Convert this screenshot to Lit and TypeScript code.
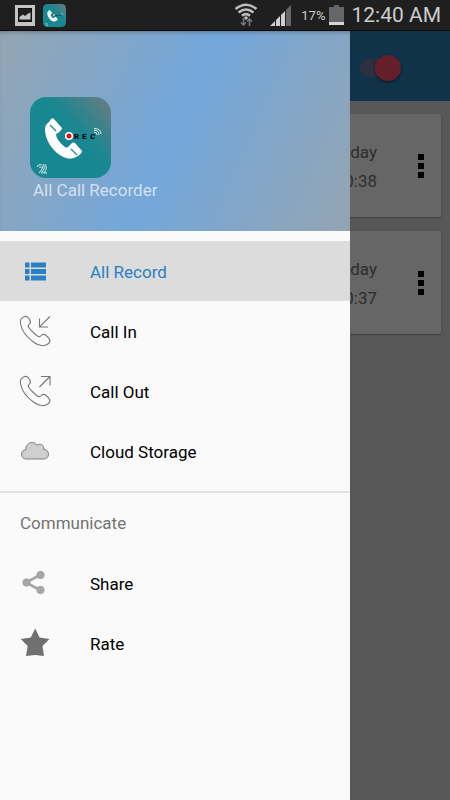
import { LitElement, html, svg, css } from "lit";
import { customElement, property, state } from "lit/decorators.js";

const HANDSET =
  "M4.500 0.500C1.500 1.500 0 4 0.500 7.500C1.500 14 7 21.500 14 26.500C18 29.300 23 30.500 26.500 28.800C28.500 27.800 30.200 26 29.800 24C29.300 22 27.500 20.500 25.500 19C23.500 17.800 22 18.500 20.800 20C19.800 21.200 17.500 20.500 15.500 18.500C12.500 16 10 13.500 8.500 11C7.600 9.500 9 8.500 10 7.300C11 6 10.300 4.500 9.300 3C8 1 6.500 0 4.500 0.500Z";

const icons: Record<string, unknown> = {
  list: svg`<g fill="#2980c4">
    <path d="M5 6.500h4.500v5H5zM11 6.500h15v5H11zM5 13h4.500v5H5zM11 13h15v5H11zM5 19.500h4.500v5H5zM11 19.500h15v5H11z"/></g>`,
  in: svg`<g fill="none" stroke="#777" stroke-width="1.100"><path d="${HANDSET}"/>
    <path d="M30 0.500L19.500 10.800M19.500 2.500v8.500h8.500"/></g>`,
  out: svg`<g fill="none" stroke="#777" stroke-width="1.100"><path d="${HANDSET}"/>
    <path d="M19.500 11L29.500 1M21 0.500h9v9"/></g>`,
  cloud: svg`<path d="M6.500 23C3.500 23 1.500 21 1.500 18.300C1.500 15.500 3.500 14 6 13.500C5.500 9.500 8.500 6.500 12 6.500C14 6.500 16 7.500 17 9.300C20 6.700 24.500 9 23.700 13.300C26.500 13.500 28.500 15.500 28.500 18.300C28.500 21 26.500 23 23.500 23Z" fill="#cfcfcf" stroke="#7d7d7d" stroke-width="1"/>`,
  share: svg`<g fill="#a6a6a6" stroke="#a6a6a6"><path d="M20 7L6 14.500L20 22" fill="none" stroke-width="2.600"/>
    <circle cx="20.500" cy="7" r="3.700"/><circle cx="6.500" cy="14.500" r="3.700"/><circle cx="20.500" cy="22" r="3.700"/></g>`,
  star: svg`<path d="M15.200 0.500L19.600 9.500L29.500 11L22.500 18L24 28L15.200 27L6 28L7.700 18L0.800 11L10.800 9.500Z" fill="#707070"/>`,
};

const logo = html`<svg viewBox="0 0 81 81" width="100%" height="100%" aria-hidden="true">
  <defs>
    <linearGradient id="teal" x1="0.450" y1="0.500" x2="1" y2="0">
      <stop offset="0" stop-color="#178792" /><stop offset="0.250" stop-color="#1b8791" />
      <stop offset="1" stop-color="#6d7c80" />
    </linearGradient>
  </defs>
  <rect width="81" height="81" rx="16" fill="url(#teal)" />
  <path d="M21 22L23 21L32 31Q32 33 28 36L26 37Q26 43 35 50Q37 51 38 50L42 46Q43 45 45 46L52 54Q52 57 46 60C40 63 35 62 27 56C19 49 15 40 15 32Q15 28 19 25Z" fill="#fff" />
  <path d="M20 28L26 34M41 52L47 58" stroke="#178792" stroke-width="1.200" fill="none" />
  <circle cx="39" cy="39" r="4" fill="#fff" /><circle cx="39" cy="39" r="2.500" fill="#e31010" />
  <g font-family="Roboto, sans-serif" font-size="8" font-weight="700" fill="#000">
    <text x="44" y="42">R</text><text x="52" y="42">E</text><text x="60" y="42" font-style="italic">C</text>
  </g>
  <g fill="none" stroke="#d7e6e7" stroke-width="1">
    <path d="M64 35Q67 35 67 38M64 33Q69 33 69 38M64 31.500Q71 31.500 71 37" />
    <path d="M7 70Q8 67 11 67.500Q14 69 12 72L9 76M9 70Q11 69 11 71M13 67Q16 71 12 75M15 67Q18 71 14 76" />
  </g>
  <text x="11" y="77" font-family="Roboto, sans-serif" font-size="3" font-weight="700" fill="#d7e6e7">Free</text>
</svg>`;

@customElement("status-bar")
class StatusBar extends LitElement {
  static styles = css`
    :host { display: flex; align-items: center; height: 31px; padding: 0 9px 0 15px;
      background: #1f1f1f; color: #ccc; border-bottom: 1px solid #120a08; box-sizing: border-box; }
    svg { display: block; flex: none; }
    .app { width: 23px; height: 23px; margin-left: 8px; }
    .space { flex: 1; }
    .signal { margin-left: 12px; }
    .percent { font-size: 13px; margin-left: 10px; }
    .battery { margin-left: 4px; }
    .time { font-size: 21px; margin-left: 7px; white-space: nowrap; }
  `;
  render() {
    return html`
      <svg width="20" height="21" viewBox="0 0 20 21" aria-hidden="true">
        <rect width="20" height="21" fill="#c4c4c4" />
        <rect x="3.500" y="3.500" width="13" height="13" fill="#1f1f1f" stroke="#111" />
        <path d="M4.500 14.500V12L8 9.500L10 11L14 8L15.500 7.500V14.500Z" fill="#c4c4c4" />
      </svg>
      <div class="app">${logo}</div>
      <div class="space"></div>
      <svg width="24" height="24" viewBox="0 0 24 24" aria-hidden="true">
        <g fill="none" stroke="#bdbdbd" stroke-width="2.600">
          <path d="M1.500 6Q12 -2.500 22.500 6M4.500 9.500Q12 3.500 19.500 9.500M8 12.800Q12 9.500 16 12.800" />
        </g>
        <circle cx="12" cy="15" r="1.800" fill="#bdbdbd" />
        <path d="M9.500 15v7M7 19.500L9.500 22L12 19.500M15.500 23v-7M13 18.500L15.500 16L18 18.500" fill="none" stroke="#777" stroke-width="1.600" />
      </svg>
      <svg class="signal" width="21" height="21" viewBox="0 0 21 21" aria-hidden="true">
        <path d="M0 21L16 5V21Z" fill="#cfcfcf" /><path d="M16 5L21 0V21H16Z" fill="#666" />
        <path d="M5.500 14v7M10.500 9v12M15.500 4v17" stroke="#1f1f1f" stroke-width="1" />
      </svg>
      <span class="percent">17%</span>
      <svg class="battery" width="15" height="20" viewBox="0 0 15 20" aria-hidden="true">
        <path d="M0 2H5V0H10V2H15V20H0Z" fill="#666" /><path d="M0 17H15V20H0Z" fill="#d5d5d5" />
      </svg>
      <span class="time">12:40 AM</span>
    `;
  }
}

@customElement("record-card")
class RecordCard extends LitElement {
  @property() day = "";
  @property() length = "";
  static styles = css`
    :host { display: flex; align-items: center; height: 103px; background: #fff; border-radius: 2px;
      box-shadow: 0 1px 2px rgba(0, 0, 0, 0.3); }
    .when { flex: 1; padding-top: 3px; text-align: right; font-size: 17px; line-height: 29px; color: #737373; }
    .more { display: flex; flex-direction: column; align-items: center; justify-content: center; gap: 3px;
      width: 40px; height: 60px; margin-left: 24px; padding: 0; border: 0; background: none; }
    .dot { width: 6px; height: 6px; background: #000; }
  `;
  render() {
    return html`
      <div class="when"><div>${this.day}</div><div>${this.length}</div></div>
      <button class="more" aria-label="More options">
        <span class="dot"></span><span class="dot"></span><span class="dot"></span>
      </button>
    `;
  }
}

@customElement("nav-drawer")
class NavDrawer extends LitElement {
  @state() selected = "All Record";
  static styles = css`
    :host { display: block; background: #fafafa; }
    .header { height: 200px; box-sizing: border-box; padding: 66px 30px 0;
      background: linear-gradient(114deg, #94a5b2 0%, #73a7db 50%, #94a5b2 100%);
      box-shadow: inset 0 4px 4px -3px rgba(0, 0, 0, 0.3); }
    .logo { width: 81px; height: 81px; }
    .title { margin: 0; padding-left: 3px; font-size: 17px; line-height: 24px; font-weight: 400; color: #d3e1f0; }
    ul { list-style: none; margin: 0; padding: 0; }
    .main { padding: 10px 0; border-bottom: 2px solid #e2e2e2; }
    .item { display: flex; align-items: center; width: 100%; height: 60px; padding: 0 20px; gap: 39px;
      border: 0; background: none; font: inherit; font-size: 17px; color: #000; text-align: left; }
    .item.on { background: #dcdcdc; color: #2980c4; }
    .item span { padding-top: 2px; }
    .item svg { flex: none; overflow: visible; }
    .group { margin: 0; padding: 0 20px; font-size: 17px; font-weight: 400; line-height: 60px; color: #737373; }
  `;
  private item(label: string, icon: string) {
    return html`<li>
      <button class="item ${this.selected === label ? "on" : ""}" @click=${() => (this.selected = label)}>
        <svg width="31" height="31" viewBox="0 0 31 31" aria-hidden="true">${icons[icon]}</svg>
        <span>${label}</span>
      </button>
    </li>`;
  }
  render() {
    return html`
      <div class="header">
        <div class="logo">${logo}</div>
        <h1 class="title">All Call Recorder</h1>
      </div>
      <nav>
        <ul class="main">
          ${this.item("All Record", "list")} ${this.item("Call In", "in")}
          ${this.item("Call Out", "out")} ${this.item("Cloud Storage", "cloud")}
        </ul>
        <h2 class="group">Communicate</h2>
        <ul>
          ${this.item("Share", "share")} ${this.item("Rate", "star")}
        </ul>
      </nav>
    `;
  }
}

@customElement("app-root")
class AppRoot extends LitElement {
  static styles = css`
    :host { display: flex; flex-direction: column; min-height: 100vh; font-family: Roboto, sans-serif; }
    .screen { flex: 1; position: relative; background: #dcdcdc; }
    .toolbar { display: flex; align-items: center; justify-content: flex-end; height: 70px; padding: 0 49px;
      background: #2980b9; }
    .switch { appearance: none; display: flex; align-items: center; justify-content: flex-end;
      width: 41px; height: 18px; margin: 4px 0 0; border-radius: 9px; background: #71779f; }
    .switch::before { content: ""; width: 26px; height: 26px; border-radius: 50%; background: #fb4f6a;
      box-shadow: 0 1px 3px rgba(0, 0, 0, 0.6); }
    .cards { display: flex; flex-direction: column; gap: 14px; padding: 13px 9px; }
    .scrim { position: absolute; inset: 0; background: rgba(0, 0, 0, 0.6); }
    .drawer { position: absolute; inset: 0 100px 0 0; }
  `;
  render() {
    return html`
      <status-bar></status-bar>
      <div class="screen">
        <header class="toolbar">
          <input class="switch" type="checkbox" role="switch" aria-label="Record calls" checked />
        </header>
        <main class="cards">
          <record-card day="Today" length="00:38"></record-card>
          <record-card day="Today" length="00:37"></record-card>
        </main>
        <div class="scrim"></div>
        <nav-drawer class="drawer"></nav-drawer>
      </div>
    `;
  }
}
